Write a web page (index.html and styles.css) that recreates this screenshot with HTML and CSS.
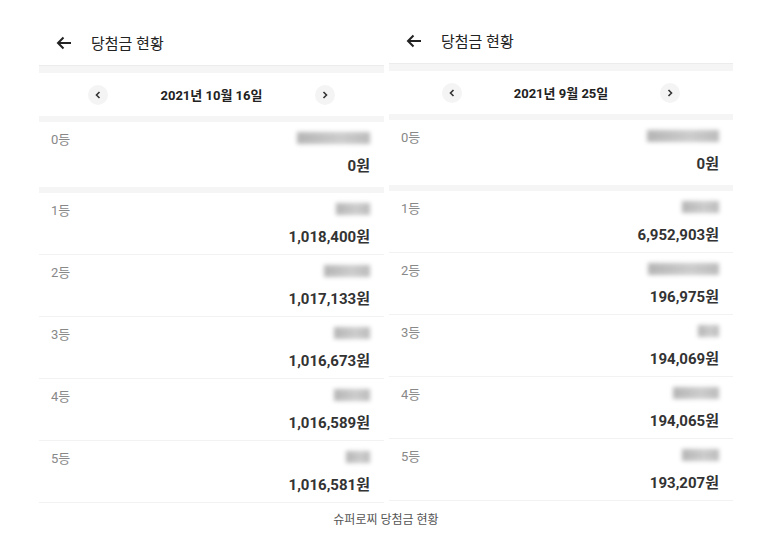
FILE: index.html
```html
<!DOCTYPE html>
<html lang="ko">
<head>
    <meta charset="UTF-8">
    <meta name="viewport" content="width=device-width, initial-scale=1.0">
    <title>슈퍼로찌 당첨금 현황</title>
    <link rel="stylesheet" href="styles.css">
</head>
<body>
    <div class="figure">
        <div class="shots">
            <div class="panel">
                <div class="header">
                    <svg class="back" width="16" height="14" viewBox="0 0 16 14"><path d="M15 7H2M7.5 1.5L2 7l5.5 5.5" fill="none" stroke="#222" stroke-width="2"/></svg>
                    <span class="title">당첨금 현황</span>
                </div>
                <div class="band"></div>
                <div class="date-bar">
                    <span class="chev"><svg width="6" height="8" viewBox="0 0 6 8"><path d="M4.5 1L1.5 4l3 3" fill="none" stroke="#333" stroke-width="1.6"/></svg></span>
                    <span class="date">2021년 10월 16일</span>
                    <span class="chev"><svg width="6" height="8" viewBox="0 0 6 8"><path d="M1.5 1l3 3-3 3" fill="none" stroke="#333" stroke-width="1.6"/></svg></span>
                </div>
                <div class="band small"></div>
                <div class="row first">
                    <div class="line"><span class="rank">0등</span><span class="blur" style="width:73px"></span></div>
                    <div class="amount">0원</div>
                </div>
                <div class="band small"></div>
                <div class="row">
                    <div class="line"><span class="rank">1등</span><span class="blur" style="width:34px"></span></div>
                    <div class="amount">1,018,400원</div>
                </div>
                <div class="row">
                    <div class="line"><span class="rank">2등</span><span class="blur" style="width:46px"></span></div>
                    <div class="amount">1,017,133원</div>
                </div>
                <div class="row">
                    <div class="line"><span class="rank">3등</span><span class="blur" style="width:36px"></span></div>
                    <div class="amount">1,016,673원</div>
                </div>
                <div class="row">
                    <div class="line"><span class="rank">4등</span><span class="blur" style="width:36px"></span></div>
                    <div class="amount">1,016,589원</div>
                </div>
                <div class="row">
                    <div class="line"><span class="rank">5등</span><span class="blur" style="width:24px"></span></div>
                    <div class="amount">1,016,581원</div>
                </div>
            </div>
            <div class="panel second">
                <div class="header">
                    <svg class="back" width="16" height="14" viewBox="0 0 16 14"><path d="M15 7H2M7.5 1.5L2 7l5.5 5.5" fill="none" stroke="#222" stroke-width="2"/></svg>
                    <span class="title">당첨금 현황</span>
                </div>
                <div class="band"></div>
                <div class="date-bar">
                    <span class="chev"><svg width="6" height="8" viewBox="0 0 6 8"><path d="M4.5 1L1.5 4l3 3" fill="none" stroke="#333" stroke-width="1.6"/></svg></span>
                    <span class="date">2021년 9월 25일</span>
                    <span class="chev"><svg width="6" height="8" viewBox="0 0 6 8"><path d="M1.5 1l3 3-3 3" fill="none" stroke="#333" stroke-width="1.6"/></svg></span>
                </div>
                <div class="band small"></div>
                <div class="row first">
                    <div class="line"><span class="rank">0등</span><span class="blur" style="width:72px"></span></div>
                    <div class="amount">0원</div>
                </div>
                <div class="band small"></div>
                <div class="row">
                    <div class="line"><span class="rank">1등</span><span class="blur" style="width:37px"></span></div>
                    <div class="amount">6,952,903원</div>
                </div>
                <div class="row">
                    <div class="line"><span class="rank">2등</span><span class="blur" style="width:71px"></span></div>
                    <div class="amount">196,975원</div>
                </div>
                <div class="row">
                    <div class="line"><span class="rank">3등</span><span class="blur" style="width:21px"></span></div>
                    <div class="amount">194,069원</div>
                </div>
                <div class="row">
                    <div class="line"><span class="rank">4등</span><span class="blur" style="width:46px"></span></div>
                    <div class="amount">194,065원</div>
                </div>
                <div class="row">
                    <div class="line"><span class="rank">5등</span><span class="blur" style="width:37px"></span></div>
                    <div class="amount">193,207원</div>
                </div>
            </div>
        </div>
        <div class="caption">슈퍼로찌 당첨금 현황</div>
    </div>
</body>
</html>
```

FILE: styles.css
```css
body {
    margin: 0;
    background-color: #fff;
    font-family: Roboto, 'Noto Sans CJK KR', sans-serif;
    color: #222;
}
.figure {
    padding-top: 20px;
}
.shots {
    display: flex;
    justify-content: center;
    align-items: flex-start;
    gap: 5px;
}
.panel {
    width: 345px;
    background-color: #fff;
}
.panel.second {
    width: 344px;
    margin-top: -2px;
}
.header {
    height: 45px;
    display: flex;
    align-items: center;
    padding-left: 17px;
    gap: 19px;
}
.title {
    font-size: 15px;
    color: #222;
}
.band {
    height: 7px;
    background-color: #f5f5f5;
    border-top: 1px solid #ececec;
}
.band.small {
    height: 6px;
    border-top: none;
}
.date-bar {
    height: 43px;
    display: flex;
    align-items: center;
    justify-content: center;
    gap: 52px;
}
.date {
    font-size: 13px;
    font-weight: bold;
    color: #222;
}
.chev {
    width: 20px;
    height: 20px;
    border-radius: 50%;
    background-color: #f4f4f4;
    display: flex;
    align-items: center;
    justify-content: center;
}
.row {
    height: 62px;
    padding: 7px 14px 0 12px;
    box-sizing: border-box;
    border-bottom: 1px solid #f2f2f2;
}
.row.first {
    height: 65px;
    border-bottom: none;
}
.line {
    height: 18px;
    display: flex;
    align-items: center;
    justify-content: space-between;
}
.rank {
    font-size: 13px;
    color: #888;
}
.blur {
    height: 12px;
    background: linear-gradient(90deg, #a8a8a8, #c4c4c4 60%, #b0b0b0);
    filter: blur(2px);
    opacity: 0.85;
}
.amount {
    margin-top: 8px;
    line-height: 22px;
    font-size: 15px;
    font-weight: bold;
    color: #333;
    text-align: right;
}
.caption {
    margin-top: 8px;
    text-align: center;
    font-size: 12px;
    line-height: 18px;
    color: #555;
}
```
